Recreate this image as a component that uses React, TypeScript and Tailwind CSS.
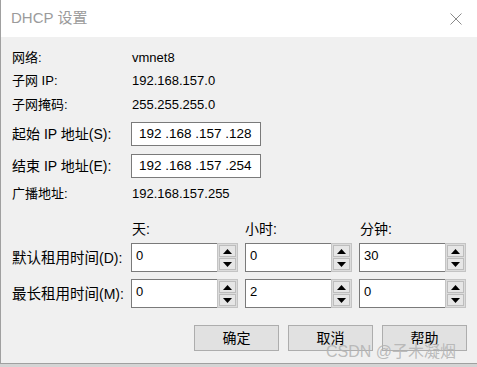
const font = { fontFamily: '"Liberation Sans", "Noto Sans CJK SC", sans-serif' };

function Arrow({ up }: { up: boolean }) {
  return (
    <svg width="9" height="5" viewBox="0 0 9 5" className="block">
      {up ? <path d="M0 5 L4.5 0 L9 5 Z" fill="#000" /> : <path d="M0 0 L9 0 L4.5 5 Z" fill="#000" />}
    </svg>
  );
}

function SpinBox({ value }: { value: string }) {
  return (
    <div className="flex h-[29px] w-[107px] shrink-0">
      <div className="h-full w-[86px] shrink-0 border border-r-0 border-[#7a7a7a] bg-white pl-[4px] pt-[4px] text-[13px] leading-[16px] text-black">
        {value}
      </div>
      <div className="flex h-full w-[21px] shrink-0 flex-col gap-px border border-[#c4c4c4] bg-[#dcdcdc] p-px">
        <div className="flex flex-1 items-center justify-center border border-[#bdbdbd] bg-[#e6e6e6]">
          <Arrow up />
        </div>
        <div className="flex flex-1 items-center justify-center border border-[#bdbdbd] bg-[#e6e6e6]">
          <Arrow up={false} />
        </div>
      </div>
    </div>
  );
}

function InfoRow({ label, value, className }: { label: string; value: string; className: string }) {
  return (
    <div className={`flex h-[20px] items-center whitespace-nowrap ${className}`}>
      <div className="w-[130px] shrink-0 pl-[11px]">{label}</div>
      <div className="pl-px">{value}</div>
    </div>
  );
}

function IpRow({ label, value, className }: { label: string; value: string; className: string }) {
  return (
    <div className={`flex h-[24px] items-center whitespace-nowrap ${className}`}>
      <div className="w-[130px] shrink-0 pl-[11px] text-[14px]">{label}</div>
      <div className="flex h-[24px] w-[130px] shrink-0 items-center border border-[#7a7a7a] bg-white pl-[7px] text-[13.5px]">
        {value}
      </div>
    </div>
  );
}

function Btn({ label }: { label: string }) {
  return (
    <div className="flex h-[26px] w-[85px] shrink-0 items-center justify-center border border-[#adadad] bg-[#e1e1e1] text-[14px]">
      {label}
    </div>
  );
}

export default function App() {
  return (
    <div className="relative h-[367px] w-[477px] overflow-hidden bg-white text-[13px] text-black" style={font}>
      <div className="flex h-[37px] items-center justify-between border-l border-[#a0a0a0] pl-[10px] pr-[15px]">
        <span className="text-[15px] text-[#9b9b9b]">DHCP 设置</span>
        <svg width="12" height="12" viewBox="0 0 12 12">
          <path d="M0.5 0.5 L11.5 11.5 M11.5 0.5 L0.5 11.5" stroke="#8a8a8a" strokeWidth="1" />
        </svg>
      </div>
      <div className="flex h-[327px] flex-col border-b border-l border-[#a0a0a0] bg-[#f0f0f0] pt-[11px]">
        <InfoRow label="网络:" value="vmnet8" className="" />
        <InfoRow label="子网 IP:" value="192.168.157.0" className="mt-[3px]" />
        <InfoRow label="子网掩码:" value="255.255.255.0" className="mt-[4px]" />
        <IpRow label="起始 IP 地址(S):" value="192 .168 .157 .128" className="mt-[7px]" />
        <IpRow label="结束 IP 地址(E):" value="192 .168 .157 .254" className="mt-[8px]" />
        <InfoRow label="广播地址:" value="192.168.157.255" className="mt-[6px]" />

        <div className="mt-[15px] flex h-[20px] items-center whitespace-nowrap">
          <div className="w-[130px] shrink-0" />
          <div className="w-[114px] shrink-0 pl-px text-[14px]">天:</div>
          <div className="w-[114px] shrink-0 text-[14px]">小时:</div>
          <div className="pl-px text-[14px]">分钟:</div>
        </div>
        <div className="mt-[4px] flex h-[29px] items-center gap-[7px]">
          <div className="w-[123px] shrink-0 whitespace-nowrap pl-[11px] pt-[2px] text-[14.5px]">
            默认租用时间<span className="text-[14px]">(D):</span>
          </div>
          <SpinBox value="0" />
          <SpinBox value="0" />
          <SpinBox value="30" />
        </div>
        <div className="mt-[7px] flex h-[29px] items-center gap-[7px]">
          <div className="w-[123px] shrink-0 whitespace-nowrap pl-[11px] pt-[2px] text-[14.5px]">
            最长租用时间<span className="text-[14px]">(M):</span>
          </div>
          <SpinBox value="0" />
          <SpinBox value="2" />
          <SpinBox value="0" />
        </div>

        <div className="mt-[17px] flex justify-end gap-[9px] pr-[10px]">
          <Btn label="确定" />
          <Btn label="取消" />
          <Btn label="帮助" />
        </div>
      </div>
      <div className="h-[3px] bg-[#d4d4d4]" />
      <div className="pointer-events-none absolute left-[326px] top-[340px] whitespace-nowrap text-[16px] text-[#b4b4b4]/90">
        CSDN @子木凝烟
      </div>
    </div>
  );
}
